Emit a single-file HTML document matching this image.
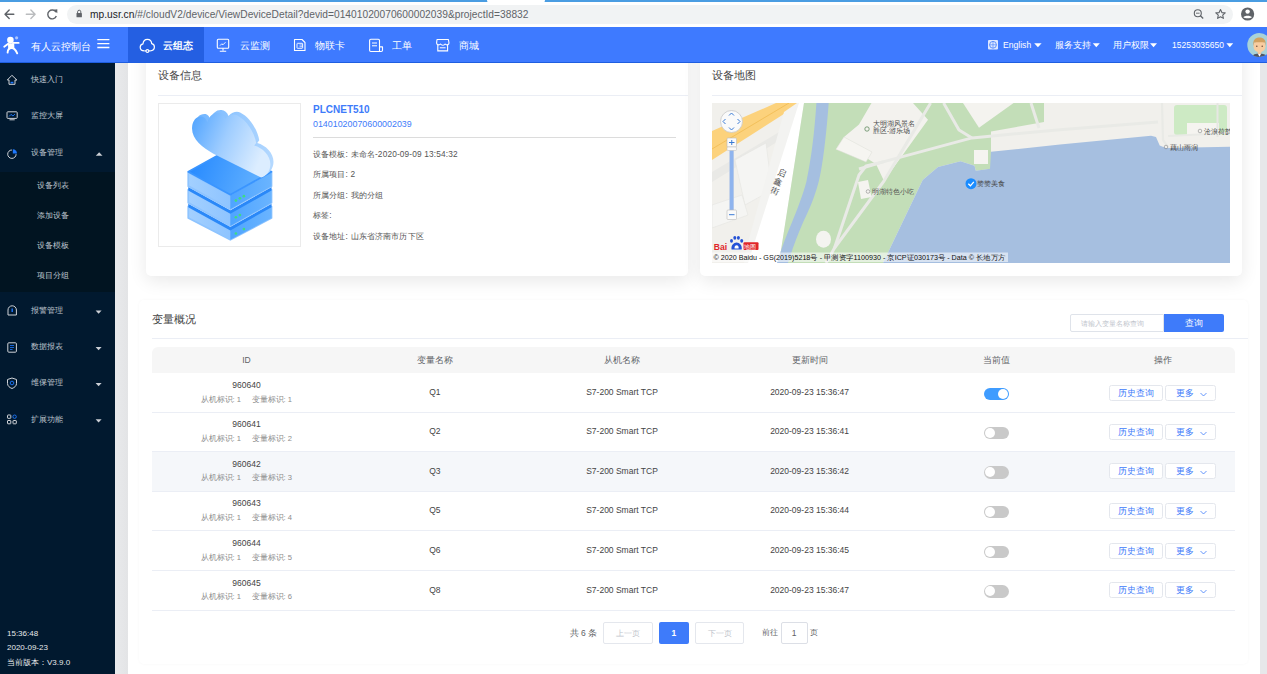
<!DOCTYPE html>
<html><head><meta charset="utf-8">
<style>
*{margin:0;padding:0;box-sizing:border-box}
html,body{width:1267px;height:674px;overflow:hidden;background:#fff;font-family:"Liberation Sans",sans-serif;position:relative}
.a{position:absolute;white-space:nowrap}
.hi{z-index:10}
.t{position:absolute;white-space:nowrap;line-height:1}
/* chrome */
#topstripe{left:0;top:0;width:1267px;height:2px;background:#4a9de2}
#gap{left:487px;top:0;width:58px;height:3px;background:#fff;border-radius:0 0 6px 6px}
#pill{left:67px;top:5px;width:1166px;height:18.5px;background:#f1f3f4;border-radius:10px}
#url{left:90px;top:10px;font-size:10.2px;color:#202124;letter-spacing:0.03px}
#url span{color:#5f6368}
/* nav */
#nav{left:0;top:27px;width:1267px;height:36px;background:#3e7aff}
#navline{z-index:10;left:0;top:62px;width:1267px;height:1px;background:#1f5ee0}
#act{z-index:10;left:128px;top:27px;width:76px;height:36px;background:#245fe2}
.nt{color:#fff;font-size:9.7px;top:40.5px;z-index:11}
/* sidebar */
#side{left:0;top:63px;width:115px;height:612px;background:#01192f}
#sub{left:0;top:172px;width:115px;height:120px;background:#011421}
#strip{left:115px;top:63px;width:13px;height:612px;background:linear-gradient(90deg,#e9eaec,#e3e4e6)}
#rstrip{left:1260px;top:63px;width:7px;height:612px;background:#e7e8ea}
.si{color:#bfc5ce;font-size:8.1px}
/* cards */
.card{position:absolute;background:#fff;border-radius:5px;box-shadow:0 1px 8px rgba(0,0,0,.09)}
.ct{color:#444;font-size:10.7px}
.line{position:absolute;height:1px;background:#ebeef5}
.info{color:#555;font-size:8.3px;letter-spacing:0.15px}
.th{color:#606266;font-size:8.5px}
.td{color:#444;font-size:8.5px}
.sm{color:#8c8c8c;font-size:7.6px}
.btn{position:absolute;border:1px solid #e4e7ed;border-radius:2.5px;background:#fff;color:#3e7bfa;font-size:8.8px;line-height:15.4px}
.tog{position:absolute;width:25px;height:12.5px;border-radius:7px;background:#c9c9c9}
.tog::after{content:"";position:absolute;top:1.2px;left:1.2px;width:10px;height:10px;border-radius:50%;background:#fff}
.tog.on{background:#3f9cff}
.tog.on::after{left:13.8px}
</style></head><body>

<!-- browser chrome -->
<div class="a hi" id="topstripe"></div>
<div class="a hi" id="gap"></div>
<div class="a hi" id="pill"></div>
<div class="t hi" id="url">mp.usr.cn<span>/#/cloudV2/device/ViewDeviceDetail?devid=01401020070600002039&amp;projectId=38832</span></div>

<!-- nav -->
<div class="a hi" id="nav"></div>
<div class="a hi" id="act"></div>
<div class="a hi" id="navline"></div>
<div class="t nt hi" style="left:31px;top:41.5px;font-size:9.6px">有人云控制台</div>
<div class="t nt hi" style="left:163px;font-weight:bold">云组态</div>
<div class="t nt hi" style="left:240px">云监测</div>
<div class="t nt hi" style="left:315px">物联卡</div>
<div class="t nt hi" style="left:392px">工单</div>
<div class="t nt hi" style="left:459px">商城</div>
<div class="t nt hi" style="left:1003px;font-size:8.6px;top:41px">English</div>
<div class="t nt hi" style="left:1055px;font-size:9.3px">服务支持</div>
<div class="t nt hi" style="left:1113px;font-size:8.7px">用户权限</div>
<div class="t nt hi" style="left:1172px;font-size:8.5px;top:41px">15253035650</div>

<!-- sidebar -->
<div class="a" id="side"></div>
<div class="a" id="sub"></div>
<div class="a" id="strip"></div>
<div class="a" id="rstrip"></div>
<div class="t si" style="left:31px;top:75.5px">快速入门</div>
<div class="t si" style="left:31px;top:112px">监控大屏</div>
<div class="t si" style="left:31px;top:149px">设备管理</div>
<div class="t si" style="left:37px;top:182px">设备列表</div>
<div class="t si" style="left:37px;top:212px">添加设备</div>
<div class="t si" style="left:37px;top:242px">设备模板</div>
<div class="t si" style="left:37px;top:272px">项目分组</div>
<div class="t si" style="left:31px;top:306.5px">报警管理</div>
<div class="t si" style="left:31px;top:343px">数据报表</div>
<div class="t si" style="left:31px;top:379px">维保管理</div>
<div class="t si" style="left:31px;top:415.5px">扩展功能</div>
<div class="t si" style="left:7px;top:629.5px;font-size:8px;color:#e6e8ea">15:36:48</div>
<div class="t si" style="left:7px;top:644px;font-size:8px;color:#e6e8ea">2020-09-23</div>
<div class="t si" style="left:7px;top:658.5px;font-size:8px;color:#e6e8ea">当前版本：V3.9.0</div>


<!-- chrome icons -->
<svg class="a hi" style="left:0;top:0" width="1267" height="27" viewBox="0 0 1267 27">
<g stroke="#5f6368" stroke-width="1.4" fill="none" stroke-linecap="round" stroke-linejoin="round">
<path d="M13.8 14.2 L5.2 14.2 M9.2 10 L5 14.2 L9.2 18.4"/>
</g>
<g stroke="#babcbe" stroke-width="1.4" fill="none" stroke-linecap="round" stroke-linejoin="round">
<path d="M26.3 14.2 L34.9 14.2 M30.9 10 L35.1 14.2 L30.9 18.4"/>
</g>
<path d="M56 12.2 A4.4 4.4 0 1 0 56.3 16" stroke="#5f6368" stroke-width="1.4" fill="none"/>
<path d="M53.5 9.8 L57.3 9.3 L57.3 13.2 Z" fill="#5f6368"/>
<rect x="76.5" y="13" width="5.4" height="4.3" rx="0.5" fill="#5f6368"/>
<path d="M77.6 13 L77.6 11.8 A1.6 1.6 0 0 1 80.8 11.8 L80.8 13" stroke="#5f6368" stroke-width="1" fill="none"/>
<circle cx="1197.8" cy="13.2" r="3.5" stroke="#5f6368" stroke-width="1.1" fill="none"/>
<path d="M1200.4 15.8 L1203.2 18.4" stroke="#5f6368" stroke-width="1.3"/>
<path d="M1196 13.2 L1199.6 13.2" stroke="#5f6368" stroke-width="0.9"/>
<path d="M1220.5 9.5 L1221.9 12.6 L1225.2 12.9 L1222.7 15.1 L1223.4 18.4 L1220.5 16.7 L1217.6 18.4 L1218.3 15.1 L1215.8 12.9 L1219.1 12.6 Z" stroke="#5f6368" stroke-width="1.1" fill="none" stroke-linejoin="round"/>
<circle cx="1247.6" cy="14" r="6.6" fill="#5f6368"/>
<circle cx="1247.6" cy="11.6" r="2.2" fill="#fff"/>
<path d="M1243.4 17.3 C1244.5 15.3 1250.7 15.3 1251.8 17.3 C1250.8 18.7 1244.4 18.7 1243.4 17.3 Z" fill="#fff"/>
</svg>

<!-- nav icons -->
<svg class="a" style="left:0;top:27px;z-index:12" width="1267" height="36" viewBox="0 27 1267 36">
<!-- logo -->
<circle cx="10.4" cy="40.1" r="3.3" fill="#fff"/>
<circle cx="16.6" cy="37.8" r="1.6" fill="#a9c4ff"/>
<path d="M8 43.3 H14.2 L14.4 48.8 H8.2 Z" fill="#fff"/>
<g stroke="#fff" fill="none" stroke-linecap="round">
<path d="M12.8 42.9 H18.7" stroke-width="1.7"/>
<path d="M8.2 43.7 L4.2 46.8" stroke-width="1.8"/>
<path d="M7.6 52.6 C7.8 49.5 9.5 48 11.6 48 C14 48 15.8 50 17.2 53.3" stroke-width="1.9"/>
</g>
<!-- hamburger -->
<g stroke="#fff" stroke-width="1.3"><path d="M97.3 39.6 H109.4 M97.3 43.6 H109.4 M97.3 47.5 H109.4"/></g>
<!-- cloud -->
<path d="M144.5 50.8 C141.6 50.8 140.2 49 140.2 47.2 C140.2 45.3 141.5 44.1 143 43.8 C143.3 41.1 145.2 39.3 147.4 39.3 C149.8 39.3 151.5 41.1 151.7 43.6 C153.3 43.9 154.4 45.3 154.4 47.1 C154.4 49 153 50.8 150.2 50.8" stroke="#fff" stroke-width="1.2" fill="none"/>
<path d="M144.6 50.8 H146.2 M148.6 50.8 H150.2" stroke="#fff" stroke-width="1.2"/>
<circle cx="147.4" cy="51" r="1.4" stroke="#fff" stroke-width="1.1" fill="none"/>
<!-- monitor -->
<rect x="217.3" y="39.2" width="11.4" height="9" rx="1" stroke="#fff" stroke-width="1.1" fill="none"/>
<path d="M223 48.2 V50.5 M219.8 51.3 H226.2" stroke="#fff" stroke-width="1.1"/>
<path d="M220 45.6 L221.8 43.8 L223 44.8 L225.5 42.2" stroke="#fff" stroke-width="0.9" fill="none"/>
<!-- sim -->
<path d="M294.5 39.5 H302 L305 42.5 V50.5 H294.5 Z" stroke="#fff" stroke-width="1.1" fill="none" stroke-linejoin="round"/>
<rect x="297" y="43.3" width="5.6" height="5" rx="0.6" stroke="#fff" stroke-width="0.9" fill="none"/>
<path d="M299.5 45 H302.6 M299.5 46.7 H302.6" stroke="#fff" stroke-width="0.7"/>
<!-- work order -->
<path d="M379.5 47 V40.5 C379.5 39.8 379 39.3 378.3 39.3 H370.8 C370.1 39.3 369.6 39.8 369.6 40.5 V50.3 C369.6 51 370.1 51.5 370.8 51.5 H381.2 C382 51.5 382.5 51 382.5 50.3 V46.9 H379.5 V51.4" stroke="#fff" stroke-width="1.1" fill="none" stroke-linejoin="round"/>
<path d="M372 43 H377 M372 45.8 H377" stroke="#fff" stroke-width="1"/>
<!-- shop -->
<path d="M437.8 44.4 V50.9 H447.6 V44.4" stroke="#fff" stroke-width="1.1" fill="none"/>
<path d="M437 39.5 H448.4 L449 43 C449 45 446.4 45.5 445.2 44 C444.2 45.6 441.6 45.6 440.5 44 C439.2 45.5 436.6 45 436.6 43 Z" stroke="#fff" stroke-width="1.1" fill="none" stroke-linejoin="round"/>
<path d="M439.8 47.8 H445.6" stroke="#fff" stroke-width="1"/>
<!-- globe -->
<rect x="988" y="40" width="10" height="9.6" rx="1" fill="#dfe8ff"/>
<circle cx="993" cy="44.8" r="3.4" stroke="#3d7bfb" stroke-width="0.8" fill="none"/>
<path d="M989.6 44.8 H996.4 M993 41.4 V48.2" stroke="#3d7bfb" stroke-width="0.6"/>
<!-- triangles -->
<g fill="#fff">
<path d="M1034.2 43.2 H1041.6 L1037.9 47.2 Z"/>
<path d="M1092.8 43.2 H1099.8 L1096.3 47.2 Z"/>
<path d="M1150 43.2 H1157 L1153.5 47.2 Z"/>
<path d="M1226.4 43.2 H1233.2 L1229.8 47.2 Z"/>
</g>
<!-- avatar -->
<defs><clipPath id="avc"><circle cx="1259.3" cy="45" r="12"/></clipPath></defs>
<circle cx="1259.3" cy="45" r="12" fill="#a8d2d8"/>
<g clip-path="url(#avc)">
<path d="M1251 58 C1252 55 1255 53.5 1259.5 53.5 C1264 53.5 1267 55 1268 58 Z" fill="#4f5564"/>
<path d="M1257.8 53.5 L1259.5 56.8 L1261.2 53.5 Z" fill="#fff"/>
<rect x="1257.8" y="50.5" width="3.4" height="3.5" fill="#f5c79a"/>
<ellipse cx="1259.5" cy="46.2" rx="6" ry="6.2" fill="#f8cc9f"/>
<path d="M1253.3 46 C1252.6 40 1255.5 37.6 1259.5 37.6 C1263.5 37.6 1266.4 40 1265.7 46 L1265 42.5 C1262.5 42 1256.5 42 1254 42.5 Z" fill="#d2a160"/>
<circle cx="1256.8" cy="46.3" r="0.75" fill="#6b4a3a"/><circle cx="1262.2" cy="46.3" r="0.75" fill="#6b4a3a"/>
</g>
</svg>

<!-- sidebar icons -->
<svg class="a" style="left:0;top:62px" width="115" height="380" viewBox="0 62 115 380">
<g stroke="#d0d3d8" stroke-width="1" fill="none" stroke-linejoin="round">
<!-- home -->
<path d="M7.3 80 L11.9 75.3 L16.9 80 H15 V84.3 H9 V80 Z"/>
<!-- monitor -->
<rect x="7" y="111.8" width="10.2" height="6.6" rx="0.8"/>
<path d="M9.5 119.8 H14.7"/>
<!-- pie -->
<path d="M16.1 154.2 A4.2 4.2 0 1 1 11.9 150"/>
<!-- bell -->
<path d="M8 315 V310 A4.2 4.2 0 0 1 16.4 310 V315 Z"/>
<!-- doc -->
<rect x="7.8" y="342.8" width="8.6" height="9.4" rx="1"/>
<!-- shield -->
<path d="M12 378 L16.5 379.5 V383.5 C16.5 386 14.5 387.5 12 388.5 C9.5 387.5 7.5 386 7.5 383.5 V379.5 Z"/>
<!-- apps -->
<rect x="7.5" y="415" width="3.3" height="3.3" rx="0.5"/>
<rect x="7.5" y="420.5" width="3.3" height="3.3" rx="0.5"/>
<rect x="13" y="420.5" width="3.3" height="3.3" rx="0.5"/>
</g>
<path d="M12.8 149.3 A4.2 4.2 0 0 1 17 153.5 H12.8 Z" fill="#1e78ff"/>
<rect x="10.6" y="81.8" width="2.8" height="1.6" fill="#1e78ff"/>
<path d="M9.2 116.4 L11 114.4 L13 116 L15 114" stroke="#1e78ff" stroke-width="0.9" fill="none"/>
<rect x="11.5" y="308.5" width="1.4" height="3.5" fill="#1e78ff"/>
<path d="M10 345.5 H14 M10 347.5 H14 M10 349.5 H12.5" stroke="#1e78ff" stroke-width="0.8"/>
<circle cx="12" cy="383" r="1.8" stroke="#1e78ff" stroke-width="0.9" fill="none"/>
<circle cx="14.6" cy="416.7" r="1.7" stroke="#1e78ff" stroke-width="0.9" fill="none"/>
<g fill="#ccd0d6">
<path d="M95.8 155.7 H102.5 L99.15 152.3 Z"/>
<path d="M95.6 310.6 H101.6 L98.6 313.8 Z"/>
<path d="M95.6 347 H101.6 L98.6 350.2 Z"/>
<path d="M95.6 383 H101.6 L98.6 386.2 Z"/>
<path d="M95.6 419.3 H101.6 L98.6 422.5 Z"/>
</g>
</svg>

<!-- card 1 -->
<div class="card" style="left:146px;top:40px;width:542px;height:236px;box-shadow:0 5px 18px rgba(0,0,0,.09)"></div>
<div class="t ct" style="left:158px;top:70px">设备信息</div>
<div class="line" style="left:158px;top:94.5px;width:530px"></div>

<div class="a" style="left:158px;top:103px;width:143px;height:144px;border:1px solid #ebebeb"></div>
<svg class="a" style="left:158px;top:100px" width="144" height="150" viewBox="0 0 647 674">
<defs>
<linearGradient id="gTop" x1="0" y1="0" x2="1" y2="0.2"><stop offset="0" stop-color="#2186ff"/><stop offset="1" stop-color="#64b2ff"/></linearGradient>
<linearGradient id="gL" x1="0" y1="0" x2="1" y2="0"><stop offset="0" stop-color="#a3d0ff"/><stop offset="1" stop-color="#79b8ff"/></linearGradient>
<linearGradient id="gR" x1="0" y1="0" x2="1" y2="0"><stop offset="0" stop-color="#4ea4ff"/><stop offset="1" stop-color="#6ab4ff"/></linearGradient>
<linearGradient id="gC" x1="0" y1="0" x2="1" y2="0.35"><stop offset="0" stop-color="#4da2ff"/><stop offset="0.5" stop-color="#9fcdff"/><stop offset="1" stop-color="#dcedff"/></linearGradient>
</defs>
<g stroke-linejoin="round">
<!-- bottom layer -->
<path d="M136 478 L325 582 L510 478 L510 530 L325 628 L136 530 Z" fill="url(#gL)" stroke="#8ec4ff" stroke-width="8"/>
<path d="M325 582 L510 478 L510 530 L325 628 Z" fill="url(#gR)"/>
<path d="M136 466 L325 570 L510 466 L510 482 L325 586 L136 482 Z" fill="#2a88f8"/>
<!-- middle layer -->
<path d="M136 403 L325 507 L510 403 L510 462 L325 566 L136 462 Z" fill="url(#gL)" stroke="#8ec4ff" stroke-width="8"/>
<path d="M325 507 L510 403 L510 462 L325 566 Z" fill="url(#gR)"/>
<path d="M136 391 L325 495 L510 391 L510 407 L325 511 L136 407 Z" fill="#2a88f8"/>
<!-- top layer -->
<path d="M136 325 L325 429 L510 325 L510 387 L325 491 L136 387 Z" fill="url(#gL)" stroke="#8ec4ff" stroke-width="8"/>
<path d="M325 429 L510 325 L510 387 L325 491 Z" fill="url(#gR)"/>
<path d="M136 322 L325 218 L510 322 L325 426 Z" fill="url(#gTop)" stroke="#3a95ff" stroke-width="8"/>
</g>
<!-- cloud extrusion -->
<linearGradient id="gS" x1="0" y1="0" x2="1" y2="0"><stop offset="0" stop-color="#6fb4ff"/><stop offset="1" stop-color="#b5d9ff"/></linearGradient>
<path transform="translate(14 -12)" d="M249 241 C200 215 150 175 153 124 C155 90 175 72 200 75 C210 78 218 88 222 100 C230 70 250 55 271 57 C285 58 297 68 303 84 C320 65 340 62 355 68 C400 90 435 150 441 193 L432 205 C470 215 505 250 505 289 C505 320 485 345 463 348 Z" fill="url(#gS)"/>
<!-- cloud -->
<path d="M249 241 C200 215 150 175 153 124 C155 90 175 72 200 75 C210 78 218 88 222 100 C230 70 250 55 271 57 C285 58 297 68 303 84 C320 65 340 62 355 68 C400 90 435 150 441 193 L432 205 C470 215 505 250 505 289 C505 320 485 345 463 348 Z" fill="url(#gC)"/>
<!-- leds -->
<g fill="#3ddc84">
<circle cx="350" cy="452" r="6"/><circle cx="368" cy="442" r="6"/><circle cx="386" cy="432" r="6"/>
<circle cx="350" cy="527" r="6"/><circle cx="368" cy="517" r="6"/>
<circle cx="350" cy="600" r="6"/><circle cx="386" cy="580" r="6"/>
</g>
</svg>
<div class="t" style="left:313px;top:105px;font-size:10px;font-weight:bold;color:#3e7bfa">PLCNET510</div>
<div class="t" style="left:313px;top:119.5px;font-size:8.9px;color:#3e7bfa">01401020070600002039</div>
<div class="a" style="left:313px;top:137px;width:363px;height:1px;background:#dcdcdc"></div>
<div class="t info" style="left:313px;top:149.5px">设备模板: 未命名-2020-09-09 13:54:32</div>
<div class="t info" style="left:313px;top:170px">所属项目: 2</div>
<div class="t info" style="left:313px;top:190.5px">所属分组: 我的分组</div>
<div class="t info" style="left:313px;top:211px">标签:</div>
<div class="t info" style="left:313px;top:231.5px">设备地址: 山东省济南市历下区</div>

<!-- card 2 -->
<div class="card" style="left:700px;top:40px;width:542px;height:236px;box-shadow:0 5px 18px rgba(0,0,0,.09)"></div>
<div class="t ct" style="left:712px;top:70px">设备地图</div>
<div class="line" style="left:712px;top:94.5px;width:530px"></div>

<svg class="a" style="left:712px;top:103px" width="518" height="160" viewBox="712 103 518 160">
<rect x="712" y="103" width="518" height="160" fill="#f1f0ec"/>
<!-- left land blocks -->
<path d="M712 172 L786 128 L790 134 L712 182 Z" fill="#e9e9e6"/>
<path d="M735 160 L766 143 L772 190 L745 205 Z" fill="#f5f5f3" stroke="#e2e2de" stroke-width="0.5"/>
<path d="M712 205 L742 195 L748 215 L712 228 Z" fill="#f5f5f3" stroke="#e2e2de" stroke-width="0.5"/>
<!-- yellow road -->
<path d="M712 131 L776 103 L801 103 L712 160 Z" fill="#fcd27c"/>
<path d="M712 149 L789 103" stroke="#efb84c" stroke-width="0.7" fill="none"/>
<!-- white road -->
<path d="M784 112 L797 103 L804 103 L779 263 L744 263 L746 250 Z" fill="#f3f3f1"/><path d="M799 103 L804 103 L779 263 L748 263 Z" fill="#ffffff"/>
<!-- green park -->
<path d="M804 103 L1044 103 L1044 122 L991 131.6 L991 168.8 L975.8 170.7 L974.5 165.7 L960.6 161.2 L938 167 L922.7 180 L883 263 L779 263 Z" fill="#c3deb8"/>
<path d="M871.5 103 L913 103 L928 119.7 L884 181 L876 164 L868 159 L836 149.3 L844 137 L859 124.6 Z" fill="#f3f2ee"/>
<path d="M836 149.3 L844 137 L872 152 L866 162 Z" fill="#f6f5f1" stroke="#dcdfd6" stroke-width="0.5"/>
<path d="M963 103 L1013.6 103 L979 127.8 Z" fill="#f4f3ef"/>
<rect x="1174" y="105" width="53" height="30" rx="3" fill="#cdeac4"/>
<rect x="1187" y="123" width="32" height="12" fill="#f5f4f0"/>
<path d="M1217.5 103 V137" stroke="#e6e7e3" stroke-width="2"/>
<!-- river -->
<path d="M816.4 103 L828.7 103 C826 140 822 170 818.8 181.3 C814 200 808 212 802.8 223 C797 236 792 250 788 263 L777 263 C781 250 786 236 791.7 223 C797 210 803 195 806.5 181.3 C810 165 814 140 816.4 103 Z" fill="#a5bfe0"/>
<!-- lake -->
<path d="M883 263 L922.7 180 L938 167 L960.6 161.2 L974.5 165.7 L975.8 170.7 L990 168.8 L991 151.8 L1060 144.5 L1151 135.7 L1156 137 L1159.7 145.6 L1165.8 148 L1230 146.8 L1230 263 Z" fill="#a6bfe0"/>
<!-- roads -->
<g stroke="#e9eae6" stroke-width="3" fill="none" stroke-linejoin="round">
<path d="M859 169 L884 161.6 L972 137.9 L1060 129.7 L1158 122"/>
<path d="M834.5 248 L859 175 L866 166 L884 161.6"/>
<path d="M930.6 103 L884 181 L834.5 248 L826 263"/>
<path d="M943.6 103 L959 130 L972 138"/>
<path d="M1031 103 L1039 128"/>
<path d="M1162 103 L1163 140 L1168 147" stroke-width="2.2"/>
<path d="M1168 136 L1230 133" stroke-width="2"/>
</g>
<rect x="974" y="150" width="14" height="14" fill="#f5f4f0"/>
<path d="M858 182 L868 180 L871.5 197 L861 199 Z" fill="#f5f4f0"/>
<ellipse cx="823.5" cy="239.3" rx="7.5" ry="8.5" fill="#f4f4f0"/>
<!-- labels -->
<circle cx="867" cy="129" r="2.2" fill="none" stroke="#4d7d4d" stroke-width="0.7"/>
<text x="873" y="126" font-size="6.6" fill="#4a4a4a" font-family="Liberation Sans">大明湖风景名</text>
<text x="873" y="133" font-size="6.6" fill="#4a4a4a" font-family="Liberation Sans">胜区-游乐场</text>
<circle cx="868" cy="191.5" r="1.8" fill="none" stroke="#888" stroke-width="0.6"/>
<text x="872" y="193.8" font-size="6.5" fill="#555" font-family="Liberation Sans">明湖特色小吃</text>
<circle cx="1200" cy="131" r="1.8" fill="none" stroke="#888" stroke-width="0.6"/>
<text x="1204" y="133.6" font-size="6.8" fill="#444" font-family="Liberation Sans">沧浪荷韵</text>
<circle cx="1166" cy="147" r="1.8" fill="none" stroke="#888" stroke-width="0.6"/>
<text x="1170" y="149.6" font-size="6.8" fill="#444" font-family="Liberation Sans">藕山雨润</text>
<circle cx="971" cy="183.7" r="5.5" fill="#1a8cff"/>
<path d="M968.3 183.8 L970.4 185.8 L973.8 181.8" stroke="#fff" stroke-width="1.3" fill="none"/>
<text x="976.5" y="186.3" font-size="6.8" fill="#444" font-family="Liberation Sans">赞赞美食</text>
<g font-size="8.4" fill="#3a3a3a" font-family="Liberation Sans"><text transform="translate(776.5 173.5) rotate(22)">启</text><text transform="translate(773 182.5) rotate(22)">鑫</text><text transform="translate(769.5 191.5) rotate(22)">街</text></g>
<!-- nav control -->
<circle cx="731.5" cy="121.5" r="11" fill="#fafafa" stroke="#c8c8c8" stroke-width="0.8"/>
<path d="M729 115.5 L731.5 113 L734 115.5 M729 127.5 L731.5 130 L734 127.5 M725.5 119 L723 121.5 L725.5 124 M737.5 119 L740 121.5 L737.5 124" stroke="#3a7bd5" stroke-width="1" fill="none"/>
<rect x="727" y="138" width="9.5" height="9" rx="1" fill="#fafafa" stroke="#bbb" stroke-width="0.6"/>
<path d="M729 142.5 L734.5 142.5 M731.75 140 L731.75 145" stroke="#3a7bd5" stroke-width="1"/>
<rect x="729.7" y="148" width="4" height="63" fill="#8fb4ee" stroke="#b9c9e4" stroke-width="0.5"/>
<rect x="727" y="147" width="9.5" height="3.5" rx="1" fill="#fafafa" stroke="#bbb" stroke-width="0.5"/>
<rect x="727" y="210" width="9.5" height="9.5" rx="1" fill="#fafafa" stroke="#bbb" stroke-width="0.6"/>
<path d="M729 214.7 L734.5 214.7" stroke="#3a7bd5" stroke-width="1"/>
<!-- baidu logo -->
<text x="713.8" y="249.5" font-size="8.6" font-weight="bold" fill="#e0262a" font-family="Liberation Sans">Bai</text>
<path d="M731.6 249.6 C730.6 245.5 733.8 242.4 736.6 242.4 C739.4 242.4 742.6 245.5 741.6 249.6 Z" fill="#2552d6"/>
<path d="M734.6 248.6 C734.2 246.4 735.4 245.2 736.6 245.2 C737.8 245.2 739 246.4 738.6 248.6 Z" fill="#fff"/>
<ellipse cx="731.5" cy="240.8" rx="1.5" ry="1.9" fill="#2552d6"/><ellipse cx="734.8" cy="237.8" rx="1.5" ry="1.9" fill="#2552d6"/><ellipse cx="738.4" cy="237.8" rx="1.5" ry="1.9" fill="#2552d6"/><ellipse cx="741.7" cy="240.8" rx="1.5" ry="1.9" fill="#2552d6"/>
<rect x="743.5" y="242.3" width="15" height="7.6" rx="1" fill="#e0262a"/>
<text x="744.4" y="249" font-size="6.4" fill="#fff" font-family="Liberation Sans">地图</text>
<!-- copyright -->
<rect x="712" y="252.5" width="296" height="9.5" fill="#ffffff" fill-opacity="0.55"/>
<text x="713.5" y="260" font-size="6.8" fill="#111" font-family="Liberation Sans" textLength="292" lengthAdjust="spacingAndGlyphs">© 2020 Baidu - GS(2019)5218号 - 甲测资字1100930 - 京ICP证030173号 - Data © 长地万方</text>
</svg>

<!-- table card -->
<div class="card" style="left:139px;top:300px;width:1109px;height:364px;box-shadow:0 0 3px rgba(0,0,0,.035)"></div>
<div class="t ct" style="left:151.5px;top:314px">变量概况</div>
<div class="line" style="left:151.5px;top:338px;width:1096.5px"></div>

<div class="a" style="left:151.5px;top:347.4px;width:1083.5px;height:25.9px;background:#f6f6f6;border-radius:6px 6px 0 0"></div>
<div class="t th" style="left:186.5px;width:120px;text-align:center;top:355.5px">ID</div>
<div class="t th" style="left:374.9px;width:120px;text-align:center;top:355.5px">变量名称</div>
<div class="t th" style="left:562px;width:120px;text-align:center;top:355.5px">从机名称</div>
<div class="t th" style="left:749.6px;width:120px;text-align:center;top:355.5px">更新时间</div>
<div class="t th" style="left:936.9px;width:120px;text-align:center;top:355.5px">当前值</div>
<div class="t th" style="left:1102.7px;width:120px;text-align:center;top:355.5px">操作</div>
<div class="line" style="left:152px;top:412.3px;width:1083px"></div>
<div class="t td" style="left:186.5px;width:120px;text-align:center;top:381.3px">960640</div>
<div class="t sm" style="left:186.3px;width:120px;text-align:center;top:395.8px">从机标识:&nbsp;1&nbsp;&nbsp;&nbsp;&nbsp;&nbsp;变量标识:&nbsp;1</div>
<div class="t td" style="left:374.9px;width:120px;text-align:center;top:388.3px">Q1</div>
<div class="t td" style="left:562px;width:120px;text-align:center;top:388.3px">S7-200 Smart TCP</div>
<div class="t td" style="left:749.6px;width:120px;text-align:center;top:388.3px">2020-09-23 15:36:47</div>
<div class="tog on" style="left:984px;top:387.8px"></div>
<div class="btn" style="left:1108.5px;top:384.8px;width:54px;height:16.4px;text-align:center">历史查询</div>
<div class="btn" style="left:1165.4px;top:384.8px;width:51px;height:16.4px;padding-left:10px">更多<svg style="position:absolute;left:34px;top:6px" width="7" height="5" viewBox="0 0 7 5"><path d="M0.5 1 L3.5 4 L6.5 1" stroke="#3e7bfa" stroke-width="0.8" fill="none"/></svg></div>
<div class="line" style="left:152px;top:451.3px;width:1083px"></div>
<div class="t td" style="left:186.5px;width:120px;text-align:center;top:420.3px">960641</div>
<div class="t sm" style="left:186.3px;width:120px;text-align:center;top:434.8px">从机标识:&nbsp;1&nbsp;&nbsp;&nbsp;&nbsp;&nbsp;变量标识:&nbsp;2</div>
<div class="t td" style="left:374.9px;width:120px;text-align:center;top:427.3px">Q2</div>
<div class="t td" style="left:562px;width:120px;text-align:center;top:427.3px">S7-200 Smart TCP</div>
<div class="t td" style="left:749.6px;width:120px;text-align:center;top:427.3px">2020-09-23 15:36:41</div>
<div class="tog" style="left:984px;top:426.8px"></div>
<div class="btn" style="left:1108.5px;top:423.8px;width:54px;height:16.4px;text-align:center">历史查询</div>
<div class="btn" style="left:1165.4px;top:423.8px;width:51px;height:16.4px;padding-left:10px">更多<svg style="position:absolute;left:34px;top:6px" width="7" height="5" viewBox="0 0 7 5"><path d="M0.5 1 L3.5 4 L6.5 1" stroke="#3e7bfa" stroke-width="0.8" fill="none"/></svg></div>
<div class="a" style="left:152px;top:451.6px;width:1083px;height:39.799999999999955px;background:#f5f7fa"></div>
<div class="line" style="left:152px;top:490.6px;width:1083px"></div>
<div class="t td" style="left:186.5px;width:120px;text-align:center;top:459.6px">960642</div>
<div class="t sm" style="left:186.3px;width:120px;text-align:center;top:474.1px">从机标识:&nbsp;1&nbsp;&nbsp;&nbsp;&nbsp;&nbsp;变量标识:&nbsp;3</div>
<div class="t td" style="left:374.9px;width:120px;text-align:center;top:466.6px">Q3</div>
<div class="t td" style="left:562px;width:120px;text-align:center;top:466.6px">S7-200 Smart TCP</div>
<div class="t td" style="left:749.6px;width:120px;text-align:center;top:466.6px">2020-09-23 15:36:42</div>
<div class="tog" style="left:984px;top:466.1px"></div>
<div class="btn" style="left:1108.5px;top:463.1px;width:54px;height:16.4px;text-align:center">历史查询</div>
<div class="btn" style="left:1165.4px;top:463.1px;width:51px;height:16.4px;padding-left:10px">更多<svg style="position:absolute;left:34px;top:6px" width="7" height="5" viewBox="0 0 7 5"><path d="M0.5 1 L3.5 4 L6.5 1" stroke="#3e7bfa" stroke-width="0.8" fill="none"/></svg></div>
<div class="line" style="left:152px;top:530.4px;width:1083px"></div>
<div class="t td" style="left:186.5px;width:120px;text-align:center;top:499.4px">960643</div>
<div class="t sm" style="left:186.3px;width:120px;text-align:center;top:513.9px">从机标识:&nbsp;1&nbsp;&nbsp;&nbsp;&nbsp;&nbsp;变量标识:&nbsp;4</div>
<div class="t td" style="left:374.9px;width:120px;text-align:center;top:506.4px">Q5</div>
<div class="t td" style="left:562px;width:120px;text-align:center;top:506.4px">S7-200 Smart TCP</div>
<div class="t td" style="left:749.6px;width:120px;text-align:center;top:506.4px">2020-09-23 15:36:44</div>
<div class="tog" style="left:984px;top:505.9px"></div>
<div class="btn" style="left:1108.5px;top:502.9px;width:54px;height:16.4px;text-align:center">历史查询</div>
<div class="btn" style="left:1165.4px;top:502.9px;width:51px;height:16.4px;padding-left:10px">更多<svg style="position:absolute;left:34px;top:6px" width="7" height="5" viewBox="0 0 7 5"><path d="M0.5 1 L3.5 4 L6.5 1" stroke="#3e7bfa" stroke-width="0.8" fill="none"/></svg></div>
<div class="line" style="left:152px;top:570px;width:1083px"></div>
<div class="t td" style="left:186.5px;width:120px;text-align:center;top:539px">960644</div>
<div class="t sm" style="left:186.3px;width:120px;text-align:center;top:553.5px">从机标识:&nbsp;1&nbsp;&nbsp;&nbsp;&nbsp;&nbsp;变量标识:&nbsp;5</div>
<div class="t td" style="left:374.9px;width:120px;text-align:center;top:546px">Q6</div>
<div class="t td" style="left:562px;width:120px;text-align:center;top:546px">S7-200 Smart TCP</div>
<div class="t td" style="left:749.6px;width:120px;text-align:center;top:546px">2020-09-23 15:36:45</div>
<div class="tog" style="left:984px;top:545.5px"></div>
<div class="btn" style="left:1108.5px;top:542.5px;width:54px;height:16.4px;text-align:center">历史查询</div>
<div class="btn" style="left:1165.4px;top:542.5px;width:51px;height:16.4px;padding-left:10px">更多<svg style="position:absolute;left:34px;top:6px" width="7" height="5" viewBox="0 0 7 5"><path d="M0.5 1 L3.5 4 L6.5 1" stroke="#3e7bfa" stroke-width="0.8" fill="none"/></svg></div>
<div class="line" style="left:152px;top:609.6px;width:1083px"></div>
<div class="t td" style="left:186.5px;width:120px;text-align:center;top:578.6px">960645</div>
<div class="t sm" style="left:186.3px;width:120px;text-align:center;top:593.1px">从机标识:&nbsp;1&nbsp;&nbsp;&nbsp;&nbsp;&nbsp;变量标识:&nbsp;6</div>
<div class="t td" style="left:374.9px;width:120px;text-align:center;top:585.6px">Q8</div>
<div class="t td" style="left:562px;width:120px;text-align:center;top:585.6px">S7-200 Smart TCP</div>
<div class="t td" style="left:749.6px;width:120px;text-align:center;top:585.6px">2020-09-23 15:36:47</div>
<div class="tog" style="left:984px;top:585.1px"></div>
<div class="btn" style="left:1108.5px;top:582.1px;width:54px;height:16.4px;text-align:center">历史查询</div>
<div class="btn" style="left:1165.4px;top:582.1px;width:51px;height:16.4px;padding-left:10px">更多<svg style="position:absolute;left:34px;top:6px" width="7" height="5" viewBox="0 0 7 5"><path d="M0.5 1 L3.5 4 L6.5 1" stroke="#3e7bfa" stroke-width="0.8" fill="none"/></svg></div>
<div class="a" style="left:1070px;top:314.2px;width:94px;height:17.4px;border:1px solid #dfe3ea;border-radius:2px 0 0 2px;background:#fff"></div>
<div class="t" style="left:1080.5px;top:319.5px;font-size:7.2px;color:#c0c4cc">请输入变量名称查询</div>
<div class="a" style="left:1163.7px;top:314.2px;width:60.3px;height:17.4px;background:#3e7bfa;border-radius:0 2px 2px 0"></div>
<div class="t" style="left:1163.7px;width:60.3px;text-align:center;top:318.5px;font-size:8.5px;color:#fff">查询</div>
<div class="t td" style="left:569.6px;top:629px;color:#606266">共 6 条</div>
<div class="a" style="left:603.3px;top:621.7px;width:49.4px;height:22.8px;border:1px solid #e4e7ed;border-radius:2px;background:#fff"></div>
<div class="t" style="left:603.3px;width:49.4px;text-align:center;top:629.5px;font-size:7.5px;color:#c0c4cc">上一页</div>
<div class="a" style="left:658.7px;top:621.7px;width:30.2px;height:22.8px;border-radius:2px;background:#3e7bfa"></div>
<div class="t" style="left:658.7px;width:30.2px;text-align:center;top:629px;font-size:8.5px;font-weight:bold;color:#fff">1</div>
<div class="a" style="left:695.3px;top:621.7px;width:49.2px;height:22.8px;border:1px solid #e4e7ed;border-radius:2px;background:#fff"></div>
<div class="t" style="left:695.3px;width:49.2px;text-align:center;top:629.5px;font-size:7.5px;color:#c0c4cc">下一页</div>
<div class="t td" style="left:762px;top:629px;font-size:8px;color:#606266">前往</div>
<div class="a" style="left:780.5px;top:621.7px;width:27.1px;height:22.8px;border:1px solid #dcdfe6;border-radius:2px;background:#fff"></div>
<div class="t td" style="left:780.5px;width:27.1px;text-align:center;top:629px;color:#606266">1</div>
<div class="t td" style="left:810.4px;top:629px;font-size:8px;color:#606266">页</div>
</body></html>
